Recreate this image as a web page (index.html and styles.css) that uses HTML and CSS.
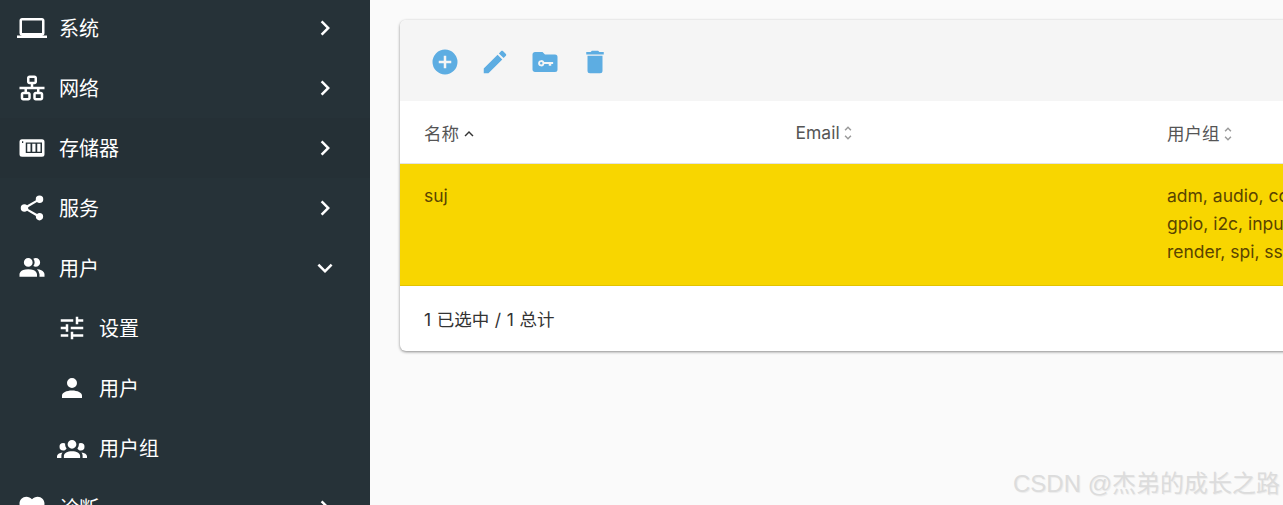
FILE: index.html
```html
<!DOCTYPE html>
<html lang="en">
<head>
    <meta charset="UTF-8">
    <meta name="viewport" content="width=device-width, initial-scale=1.0">
    <title>用户</title>
    <link rel="stylesheet" href="styles.css">
</head>
<body>

    <nav class="sidebar">
        <ul class="nav-list">
            <li class="nav-item">
                <svg class="icon" viewBox="0 0 24 24"><path d="M4,6H20V16H4M20,18A2,2 0 0,0 22,16V6C22,4.89 21.1,4 20,4H4C2.89,4 2,4.89 2,6V16A2,2 0 0,0 4,18H0V20H24V18H20Z"/></svg>
                <span class="nav-label">系统</span>
                <svg class="icon" viewBox="0 0 24 24"><path d="M8.59,16.58L13.17,12L8.59,7.41L10,6L16,12L10,18L8.59,16.58Z"/></svg>
            </li>
            <li class="nav-item">
                <svg class="icon" viewBox="0 0 24 24"><path d="M10,2C8.89,2 8,2.89 8,4V7C8,8.11 8.89,9 10,9H11V11H2V13H6V15H5C3.89,15 3,15.89 3,17V20C3,21.11 3.89,22 5,22H9C10.11,22 11,21.11 11,20V17C11,15.89 10.11,15 9,15H8V13H16V15H15C13.89,15 13,15.89 13,17V20C13,21.11 13.89,22 15,22H19C20.11,22 21,21.11 21,20V17C21,15.89 20.11,15 19,15H18V13H22V11H13V9H14C15.11,9 16,8.11 16,7V4C16,2.89 15.11,2 14,2H10M10,4H14V7H10V4M5,17H9V20H5V17M15,17H19V20H15V17Z"/></svg>
                <span class="nav-label">网络</span>
                <svg class="icon" viewBox="0 0 24 24"><path d="M8.59,16.58L13.17,12L8.59,7.41L10,6L16,12L10,18L8.59,16.58Z"/></svg>
            </li>
            <li class="nav-item nav-item-hover">
                <svg class="icon" viewBox="0 0 24 24"><path fill-rule="evenodd" d="M4,5H20A2,2 0 0,1 22,7V17A2,2 0 0,1 20,19H4A2,2 0 0,1 2,17V7A2,2 0 0,1 4,5ZM4,6.5V8H5V6.5ZM7,7.5V16H20V7.5ZM8.2,8.5H10.8V15H8.2ZM12.2,8.5H14.8V15H12.2ZM16.2,8.5H18.8V15H16.2Z"/></svg>
                <span class="nav-label">存储器</span>
                <svg class="icon" viewBox="0 0 24 24"><path d="M8.59,16.58L13.17,12L8.59,7.41L10,6L16,12L10,18L8.59,16.58Z"/></svg>
            </li>
            <li class="nav-item">
                <svg class="icon" viewBox="0 0 24 24"><path d="M18,16.08C17.24,16.08 16.56,16.38 16.04,16.85L8.91,12.7C8.96,12.47 9,12.24 9,12C9,11.76 8.96,11.53 8.91,11.3L15.96,7.19C16.5,7.69 17.21,8 18,8A3,3 0 0,0 21,5A3,3 0 0,0 18,2A3,3 0 0,0 15,5C15,5.24 15.04,5.47 15.09,5.7L8.04,9.81C7.5,9.31 6.79,9 6,9A3,3 0 0,0 3,12A3,3 0 0,0 6,15C6.79,15 7.5,14.69 8.04,14.19L15.16,18.34C15.11,18.55 15.08,18.77 15.08,19C15.08,20.61 16.39,21.91 18,21.91C19.61,21.91 20.92,20.61 20.92,19A2.92,2.92 0 0,0 18,16.08Z"/></svg>
                <span class="nav-label">服务</span>
                <svg class="icon" viewBox="0 0 24 24"><path d="M8.59,16.58L13.17,12L8.59,7.41L10,6L16,12L10,18L8.59,16.58Z"/></svg>
            </li>
            <li class="nav-item">
                <svg class="icon" viewBox="0 0 24 24"><path d="M16 17V19H2V17S2 13 9 13 16 17 16 17M12.5 7.5A3.5 3.5 0 1 0 9 11A3.5 3.5 0 0 0 12.5 7.5M15.94 13A5.32 5.32 0 0 1 18 17V19H22V17S22 13.37 15.94 13M15 4A3.39 3.39 0 0 0 13.07 4.59A5 5 0 0 1 13.07 10.41A3.39 3.39 0 0 0 15 11A3.5 3.5 0 0 0 15 4Z"/></svg>
                <span class="nav-label">用户</span>
                <svg class="icon" viewBox="0 0 24 24"><path d="M7.41,8.58L12,13.17L16.59,8.58L18,10L12,16L6,10L7.41,8.58Z"/></svg>
            </li>
            <li class="nav-item nav-child">
                <svg class="icon" viewBox="0 0 24 24"><path d="M3,17V19H9V17H3M3,5V7H13V5H3M13,21V19H21V17H13V15H11V21H13M7,9V11H3V13H7V15H9V9H7M21,13V11H11V13H21M15,9H17V7H21V5H17V3H15V9Z"/></svg>
                <span class="nav-label">设置</span>
            </li>
            <li class="nav-item nav-child">
                <svg class="icon" viewBox="0 0 24 24"><path d="M12,4A4,4 0 0,1 16,8A4,4 0 0,1 12,12A4,4 0 0,1 8,8A4,4 0 0,1 12,4M12,14C16.42,14 20,15.79 20,18V20H4V18C4,15.79 7.58,14 12,14Z"/></svg>
                <span class="nav-label">用户</span>
            </li>
            <li class="nav-item nav-child">
                <svg class="icon" viewBox="0 0 24 24"><path d="M12,5.5A3.5,3.5 0 0,1 15.5,9A3.5,3.5 0 0,1 12,12.5A3.5,3.5 0 0,1 8.5,9A3.5,3.5 0 0,1 12,5.5M5,8C5.56,8 6.08,8.15 6.53,8.42C6.38,9.85 6.8,11.27 7.66,12.38C7.16,13.34 6.16,14 5,14A3,3 0 0,1 2,11A3,3 0 0,1 5,8M19,8A3,3 0 0,1 22,11A3,3 0 0,1 19,14C17.84,14 16.84,13.34 16.34,12.38C17.2,11.27 17.62,9.85 17.47,8.42C17.92,8.15 18.44,8 19,8M5.5,18.25C5.5,16.18 8.41,14.5 12,14.5C15.59,14.5 18.5,16.18 18.5,18.25V20H5.5V18.25M0,20V18.5C0,17.11 1.89,15.94 4.45,15.6C3.86,16.28 3.5,17.22 3.5,18.25V20H0M24,20H20.5V18.25C20.5,17.22 20.14,16.28 19.55,15.6C22.11,15.94 24,17.11 24,18.5V20Z"/></svg>
                <span class="nav-label">用户组</span>
            </li>
            <li class="nav-item">
                <svg class="icon" viewBox="0 0 24 24"><path d="M12,21.35L10.55,20.03C5.4,15.36 2,12.27 2,8.5C2,5.41 4.42,3 7.5,3C9.24,3 10.91,3.81 12,5.08C13.09,3.81 14.76,3 16.5,3C19.58,3 22,5.41 22,8.5C22,12.27 18.6,15.36 13.45,20.03L12,21.35Z"/></svg>
                <span class="nav-label">诊断</span>
                <svg class="icon" viewBox="0 0 24 24"><path d="M8.59,16.58L13.17,12L8.59,7.41L10,6L16,12L10,18L8.59,16.58Z"/></svg>
            </li>
        </ul>
    </nav>

    <main class="content">
        <section class="card">
            <div class="toolbar">
                <button class="tool-button"><svg class="icon" viewBox="0 0 24 24"><path d="M17,13H13V17H11V13H7V11H11V7H13V11H17M12,2A10,10 0 0,0 2,12A10,10 0 0,0 12,22A10,10 0 0,0 22,12A10,10 0 0,0 12,2Z"/></svg></button>
                <button class="tool-button"><svg class="icon" viewBox="0 0 24 24"><path d="M20.71,7.04C21.1,6.65 21.1,6 20.71,5.63L18.37,3.29C18,2.9 17.35,2.9 16.96,3.29L15.12,5.12L18.87,8.87M3,17.25V21H6.75L17.81,9.93L14.06,6.18L3,17.25Z"/></svg></button>
                <button class="tool-button"><svg class="icon" viewBox="0 0 24 24"><path fill-rule="evenodd" d="M10,4L12,6H20A2,2 0 0,1 22,8V18A2,2 0 0,1 20,20H4C2.89,20 2,19.1 2,18V6C2,4.89 2.89,4 4,4H10ZM9,10.5A2.5,2.5 0 1,0 11.45,13.5H15V15H17V13.5H18.5V12H11.45A2.5,2.5 0 0,0 9,10.5ZM9,12A1,1 0 1,1 9,14A1,1 0 0,1 9,12Z"/></svg></button>
                <button class="tool-button"><svg class="icon" viewBox="0 0 24 24"><path d="M19,4H15.5L14.5,3H9.5L8.5,4H5V6H19M6,19A2,2 0 0,0 8,21H16A2,2 0 0,0 18,19V7H6V19Z"/></svg></button>
            </div>

            <table class="data-table">
                <thead>
                    <tr>
                        <th>名称<svg class="sort-icon sort-active" viewBox="0 0 24 24"><path d="M7.41,15.41L12,10.83L16.59,15.41L18,14L12,8L6,14L7.41,15.41Z"/></svg></th>
                        <th>Email<svg class="sort-icon" viewBox="0 0 24 24"><path d="M12,18.17L8.83,15L7.41,16.41L12,21L16.59,16.41L15.17,15M12,5.83L15.17,9L16.59,7.59L12,3L7.41,7.59L8.83,9L12,5.83Z"/></svg></th>
                        <th>用户组<svg class="sort-icon" viewBox="0 0 24 24"><path d="M12,18.17L8.83,15L7.41,16.41L12,21L16.59,16.41L15.17,15M12,5.83L15.17,9L16.59,7.59L12,3L7.41,7.59L8.83,9L12,5.83Z"/></svg></th>
                    </tr>
                </thead>
                <tbody>
                    <tr class="row-selected">
                        <td>suj</td>
                        <td></td>
                        <td>adm, audio, colord, dialout,<br>gpio, i2c, input, netdev,<br>render, spi, ssh, sudo</td>
                    </tr>
                </tbody>
            </table>

            <div class="table-footer">1 已选中 / 1 总计</div>
        </section>
    </main>

    <div class="watermark">CSDN @杰弟的成长之路</div>

</body>
</html>
```

FILE: styles.css
```css
html, body {
    margin: 0;
    padding: 0;
    height: 100%;
    overflow: hidden;
}

body {
    display: flex;
    background-color: #fafafa;
    font-family: 'Inter', 'Noto Sans CJK SC', sans-serif;
    font-size: 17.5px;
    color: #333;
}

.icon {
    display: block;
    flex: none;
    width: 30px;
    height: 30px;
    fill: currentColor;
}

/* sidebar */
.sidebar {
    flex: none;
    width: 370px;
    height: 100%;
    overflow: hidden;
    background-color: #263238;
    color: #fff;
}

.nav-list {
    list-style: none;
    margin: -2px 0 0;
    padding: 0;
}

.nav-item {
    display: flex;
    align-items: center;
    gap: 12px;
    height: 60px;
    padding: 0 30px 0 17px;
    font-size: 20px;
}

.nav-item-hover {
    background-color: #253036;
}

.nav-child {
    padding-left: 57px;
}

.nav-label {
    flex: 1;
    margin-top: -1px;
}

/* main */
.content {
    flex: 1;
    min-width: 0;
    padding: 20px 0 0 30px;
}

.card {
    width: 1200px;
    background-color: #fff;
    border-radius: 6px;
    box-shadow: 0 1px 3px rgba(0, 0, 0, 0.45);
    overflow: hidden;
}

.toolbar {
    display: flex;
    align-items: center;
    height: 79px;
    padding: 2px 0 0 20px;
    background-color: #f5f5f5;
    color: #5dade2;
}

.tool-button {
    display: flex;
    align-items: center;
    justify-content: center;
    width: 50px;
    height: 50px;
    padding: 0;
    border: none;
    background: none;
    color: inherit;
}

.data-table {
    width: 100%;
    table-layout: fixed;
    border-collapse: collapse;
}

.data-table th {
    box-sizing: border-box;
    width: 371.5px;
    height: 62px;
    padding: 1px 24px 0;
    border-bottom: 1px solid #e3e3e3;
    font-weight: 400;
    text-align: left;
    color: #555;
}

.data-table th:last-child {
    width: auto;
}

.sort-icon {
    width: 18px;
    height: 18px;
    margin-left: -1px;
    vertical-align: -3px;
    fill: #999;
}

.sort-active {
    margin-left: 1px;
    fill: #333;
}

.data-table td {
    padding: 18px 24px 19px;
    line-height: 28px;
    vertical-align: top;
    white-space: nowrap;
}

.row-selected {
    background-color: #f8d600;
    color: #5a4400;
    border-bottom: 1px solid #e2c300;
}

.table-footer {
    display: flex;
    align-items: center;
    height: 65px;
    padding-left: 24px;
    word-spacing: 0.7px;
    color: #333;
}

.watermark {
    position: absolute;
    right: 3px;
    bottom: 6px;
    font-family: 'Liberation Sans', 'Noto Sans CJK SC', sans-serif;
    font-size: 24px;
    color: #dcdcdc;
    text-shadow: 1px 1px 1px rgba(0, 0, 0, 0.06);
}
```
